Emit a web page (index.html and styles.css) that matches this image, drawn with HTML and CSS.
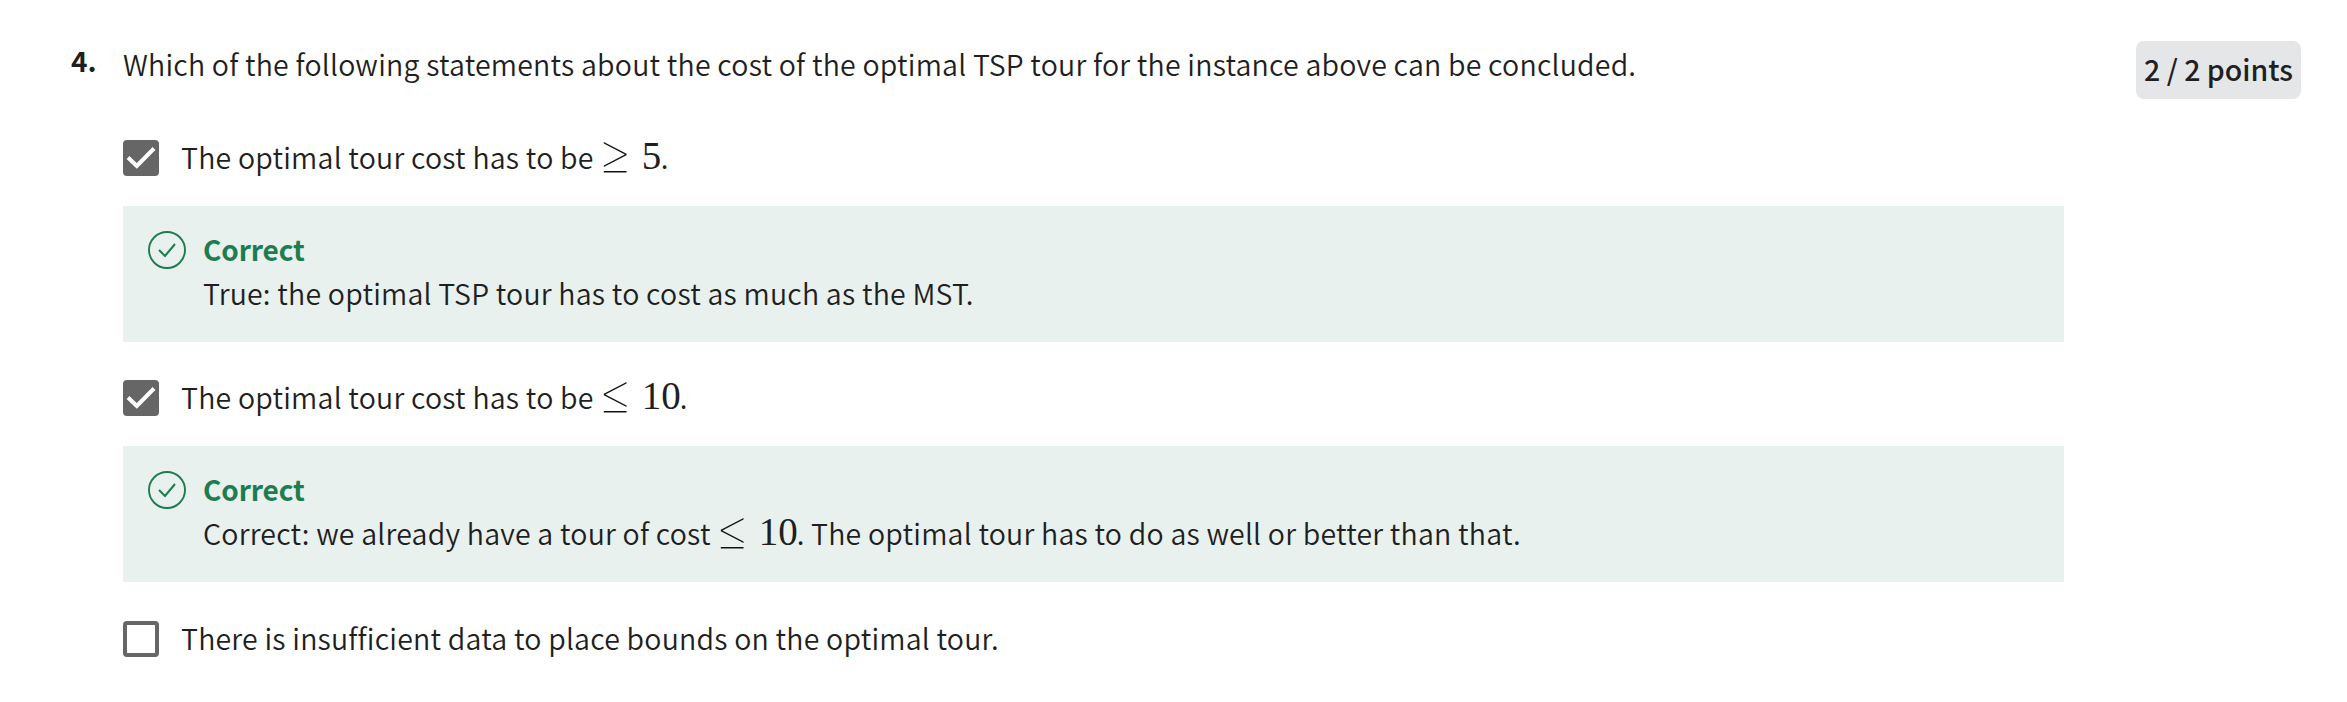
FILE: index.html
```html
<!DOCTYPE html>
<html lang="en">
<head>
<meta charset="utf-8">
<title>Quiz question</title>
<link rel="stylesheet" href="styles.css">
</head>
<body>
<main class="question">
  <div class="number">4.</div>
  <section class="content">
    <h1 class="prompt">Which of the following statements about the cost of the optimal TSP tour for the instance above can be concluded.</h1>
    <div class="option">
      <svg class="box" viewBox="0 0 36 36"><rect width="36" height="36" rx="4" fill="#666"/><path d="M5 17.5L13.8 26L31 8.5" fill="none" stroke="#fff" stroke-width="4"/></svg>
      <p class="label">The optimal tour cost has to be<span class="math"><span class="rel">≥</span><span class="num one">5</span></span>.</p>
    </div>
    <div class="feedback">
      <svg class="tick" viewBox="0 0 38 38"><circle cx="19" cy="19" r="18" fill="none" stroke="#1d7c50" stroke-width="1.9"/><path d="M11 19L17 25L27 13" fill="none" stroke="#1d7c50" stroke-width="2"/></svg>
      <div class="message">
        <h2 class="verdict">Correct</h2>
        <p class="reason">True: the optimal TSP tour has to cost as much as the MST.</p>
      </div>
    </div>
    <div class="option">
      <svg class="box" viewBox="0 0 36 36"><rect width="36" height="36" rx="4" fill="#666"/><path d="M5 17.5L13.8 26L31 8.5" fill="none" stroke="#fff" stroke-width="4"/></svg>
      <p class="label">The optimal tour cost has to be<span class="math"><span class="rel">≤</span><span class="num two">10</span></span>.</p>
    </div>
    <div class="feedback">
      <svg class="tick" viewBox="0 0 38 38"><circle cx="19" cy="19" r="18" fill="none" stroke="#1d7c50" stroke-width="1.9"/><path d="M11 19L17 25L27 13" fill="none" stroke="#1d7c50" stroke-width="2"/></svg>
      <div class="message">
        <h2 class="verdict">Correct</h2>
        <p class="reason">Correct: we already have a tour of cost<span class="math"><span class="rel">≤</span><span class="num two">10</span></span>. The optimal tour has to do as well or better than that.</p>
      </div>
    </div>
    <div class="option">
      <svg class="box" viewBox="0 0 36 36"><rect x="2" y="2" width="32" height="32" rx="2" fill="none" stroke="#666" stroke-width="4"/></svg>
      <p class="label">There is insufficient data to place bounds on the optimal tour.</p>
    </div>
  </section>
  <div class="points">2 / 2 points</div>
</main>
</body>
</html>
```
FILE: styles.css
```css
* { box-sizing: border-box; margin: 0; padding: 0; }
body {
  background: #fff;
  color: #1f1f1f;
  font-family: "Noto Sans CJK SC", "Noto Sans CJK JP", sans-serif;
  font-size: 28.5px;
  font-weight: 350;
  line-height: 44px;
  white-space: nowrap;
}
.question { display: flex; align-items: flex-start; height: 702px; overflow: hidden; }
.number { width: 123px; padding: 38px 0 0 71px; font-size: 28px; font-weight: 700; }
.content { width: 1941px; padding-top: 42px; }
.prompt, .label, .reason { letter-spacing: 0.205px; font-variant-ligatures: common-ligatures; }
.prompt { height: 98px; font-size: inherit; font-weight: inherit; }
.option { display: flex; gap: 22px; height: 66px; }
.box { width: 36px; height: 36px; flex: none; }
.label { margin-top: -5px; height: 44px; }
.feedback { display: flex; height: 136px; margin-bottom: 38px; padding: 25px 25px 0; gap: 17px; background: #e8f1ee; }
.feedback + .option:last-child { margin-top: 39px; }
.tick { width: 38px; height: 38px; flex: none; }
.message { margin-top: -4px; }
.verdict { height: 44px; font-size: 28px; font-weight: 700; letter-spacing: -0.1px; color: #1d7c50; }
.reason { height: 44px; }
.math { display: inline-flex; align-items: baseline; margin-left: 7px; line-height: 40px; letter-spacing: 0; }
.rel {
  width: 41px;
  font-family: Inter, "Liberation Serif", sans-serif;
  font-weight: 140;
  font-size: 52px;
  line-height: 30px;
  transform: translate(-4px, 6px) scale(1.1, 1.17);
  transform-origin: 0 34px;
  color: #111;
}
.num { font-family: "Liberation Serif", serif; font-weight: 400; font-size: 39px; }
.one { width: 19px; }
.two { width: 38px; }
.points { margin: 41px 0 0 72px; width: 165px; height: 58px; border-radius: 8px; background: #e5e6e8; text-align: center; line-height: 56px; font-weight: 500; }
```
